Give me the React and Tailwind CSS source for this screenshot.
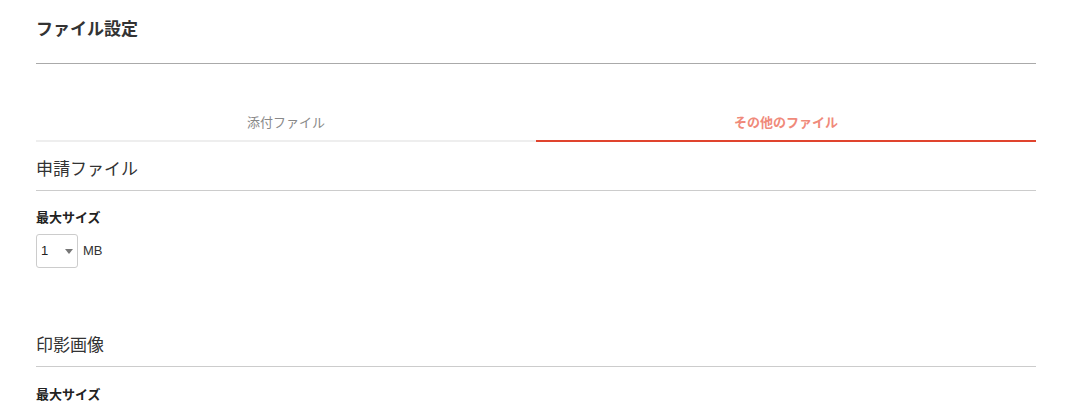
import React, { useState } from 'react'

const font = 'font-["Liberation_Sans","Noto_Sans_CJK_JP",sans-serif]'

function SectionHeading({ children, className = '' }) {
  return (
    <div className={`border-b border-[#cccccc] pb-[8px] text-[17px] leading-[24px] text-[#333] ${className}`}>
      {children}
    </div>
  )
}

function SizeSelect({ value }) {
  return (
    <div className="mt-[7px] flex items-center">
      <div className="relative flex h-[34px] w-[42px] items-center rounded-[3px] border border-[#cccccc] bg-white pl-[4px] text-[13px] text-[#222]">
        <span>{value}</span>
        <svg className="absolute right-[4px] top-[14px]" width="8" height="5" viewBox="0 0 8 5">
          <path d="M0 0h8L4 5z" fill="#777" />
        </svg>
      </div>
      <span className="ml-[5px] text-[13px] text-[#333]">MB</span>
    </div>
  )
}

export default function App() {
  const [tab, setTab] = useState('other')
  const tabs = [
    { id: 'attach', label: '添付ファイル' },
    { id: 'other', label: 'その他のファイル' },
  ]

  return (
    <div className={`h-[410px] w-[1089px] overflow-hidden bg-white ${font}`}>
      <div className="ml-[36px] w-[1000px]">
        <h1 className="pt-[18px] text-[17px] font-bold leading-[24px] text-[#333]">ファイル設定</h1>
        <div className="mt-[21px] border-t border-[#aaaaaa]" />

        {/* Tabs */}
        <div className="mt-[41px] flex">
          {tabs.map((t) => (
            <button
              key={t.id}
              onClick={() => setTab(t.id)}
              className={`flex-1 border-b-2 pb-[7px] pt-[8px] text-[13px] leading-[20px] ${
                tab === t.id
                  ? 'border-[#e0442e] font-bold text-[#f08a7a]'
                  : 'border-[#eeeeee] text-[#888]'
              }`}
            >
              {t.label}
            </button>
          ))}
        </div>

        {/* 申請ファイル */}
        <SectionHeading className="mt-[16px]">申請ファイル</SectionHeading>
        <div className="mt-[18px] text-[13px] font-bold leading-[18px] text-[#222]">最大サイズ</div>
        <SizeSelect value="1" />

        {/* 印影画像 */}
        <SectionHeading className="mt-[66px]">印影画像</SectionHeading>
        <div className="mt-[19px] text-[13px] font-bold leading-[18px] text-[#222]">最大サイズ</div>
      </div>
    </div>
  )
}
